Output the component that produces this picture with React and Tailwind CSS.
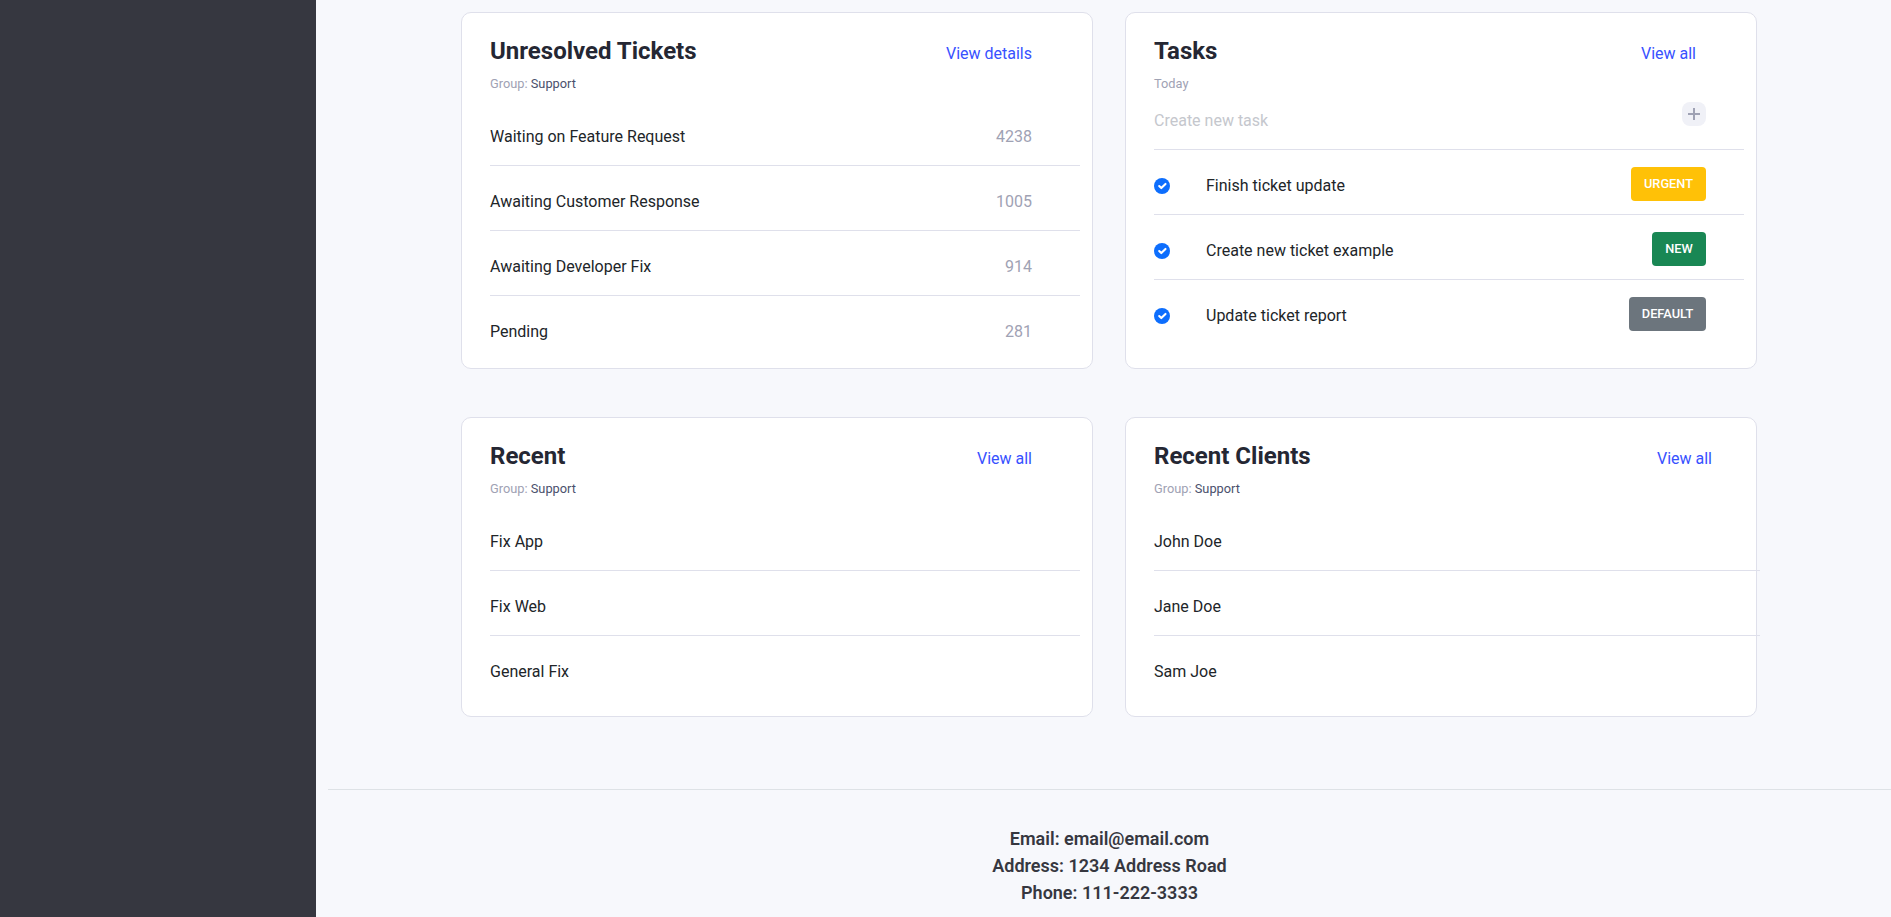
import { clsx } from "clsx";

function Card({ title, sub, link, linkPad, className, listClass, children }) {
  return (
    <section
      className={clsx(
        "w-[632px] rounded-[10px] border border-[#dfe0eb] bg-white pl-[28px] pt-[22px]",
        className
      )}
    >
      <header className={clsx("flex items-start justify-between", linkPad)}>
        <h2 className="text-[24px] leading-[32px] font-bold text-[#252733]">{title}</h2>
        <a href="#" className="mt-[7px] text-[16px] leading-[24px] text-[#3751ff]">
          {link}
        </a>
      </header>
      <p className="mt-[7px] text-[12.8px] leading-[20px] text-[#9fa2b4]">{sub}</p>
      <ul className={listClass}>{children}</ul>
    </section>
  );
}

function Row({ children, last }) {
  return (
    <li
      className={clsx(
        "flex h-[65px] justify-between border-b pt-[24px] pr-[48px] text-[16px] leading-[24px] text-[#212529]",
        last ? "border-transparent" : "border-[#dfe0eb]"
      )}
    >
      {children}
    </li>
  );
}

function CheckCircle() {
  return (
    <svg viewBox="0 0 16 16" className="mt-[28px] size-[16px] shrink-0">
      <circle cx="8" cy="8" r="8" fill="#0d6efd" />
      <path
        d="M5.2 8l2.1 2.1l4.2-4.2"
        fill="none"
        stroke="#fff"
        strokeWidth="2.1"
        strokeLinecap="round"
        strokeLinejoin="round"
      />
    </svg>
  );
}

function Task({ name, tag, tagClass, last }) {
  return (
    <li
      className={clsx(
        "flex h-[65px] border-b pr-[38px] text-[16px] leading-[24px] text-[#212529]",
        last ? "border-transparent" : "border-[#dfe0eb]"
      )}
    >
      <CheckCircle />
      <span className="ml-[36px] grow pt-[24px]">{name}</span>
      <button
        className={clsx(
          "mt-[17px] h-[34px] rounded-[4px] text-[12.8px] leading-[20px] font-medium text-white",
          tagClass
        )}
      >
        {tag}
      </button>
    </li>
  );
}

const group = (
  <>
    Group: <span className="text-[#4b506d]">Support</span>
  </>
);

const tickets = [
  ["Waiting on Feature Request", 4238],
  ["Awaiting Customer Response", 1005],
  ["Awaiting Developer Fix", 914],
  ["Pending", 281],
];
const recent = ["Fix App", "Fix Web", "General Fix"];
const clients = ["John Doe", "Jane Doe", "Sam Joe"];

export default function App() {
  return (
    <div className="flex h-[917px] overflow-hidden bg-[#f7f8fc] font-['Roboto',sans-serif]">
      <aside className="w-[316px] shrink-0 bg-[#363740]" />
      <div className="flex grow flex-col pl-[12px]">
        <main className="ml-[133px] mt-[12px] flex flex-col gap-[48px]">
          <div className="flex gap-[32px]">
            <Card
              title="Unresolved Tickets"
              sub={group}
              link="View details"
              linkPad="pr-[60px]"
              className="h-[357px]"
              listClass="mt-[7px] w-[590px]"
            >
              {tickets.map(([name, count], i) => (
                <Row key={name} last={i === 3}>
                  <span>{name}</span>
                  <span className="text-[#9fa2b4]">{count}</span>
                </Row>
              ))}
            </Card>
            <Card
              title="Tasks"
              sub="Today"
              link="View all"
              linkPad="pr-[60px]"
              className="h-[357px]"
              listClass="w-[590px]"
            >
              <li className="flex h-[56px] items-start justify-between border-b border-[#dfe0eb] pr-[38px]">
                <span className="mt-[15px] text-[16px] leading-[24px] text-[#c5c7cd]">
                  Create new task
                </span>
                <button className="mt-[8px] flex size-[24px] items-center justify-center rounded-[8px] bg-[#f0f1f7]">
                  <svg viewBox="0 0 12 12" className="size-[12px]">
                    <path d="M5 0h2v5h5v2H7v5H5V7H0V5h5z" fill="#9fa2b4" />
                  </svg>
                </button>
              </li>
              <Task name="Finish ticket update" tag="URGENT" tagClass="w-[75px] bg-[#ffc107]" />
              <Task name="Create new ticket example" tag="NEW" tagClass="w-[54px] bg-[#198754]" />
              <Task
                name="Update ticket report"
                tag="DEFAULT"
                tagClass="w-[77px] bg-[#6c757d]"
                last
              />
            </Card>
          </div>
          <div className="flex gap-[32px]">
            <Card
              title="Recent"
              sub={group}
              link="View all"
              linkPad="pr-[60px]"
              className="h-[300px]"
              listClass="mt-[7px] w-[590px]"
            >
              {recent.map((name, i) => (
                <Row key={name} last={i === 2}>
                  <span>{name}</span>
                </Row>
              ))}
            </Card>
            <Card
              title="Recent Clients"
              sub={group}
              link="View all"
              linkPad="pr-[44px]"
              className="h-[300px]"
              listClass="mt-[7px] w-[606px]"
            >
              {clients.map((name, i) => (
                <Row key={name} last={i === 2}>
                  <span>{name}</span>
                </Row>
              ))}
            </Card>
          </div>
        </main>
        <footer className="mt-[72px] border-t border-[#dee2e6] pt-[35px] text-center text-[18px] leading-[27px] font-semibold text-[#363740]">
          <p>Email: email@email.com</p>
          <p>Address: 1234 Address Road</p>
          <p>Phone: 111-222-3333</p>
        </footer>
      </div>
    </div>
  );
}
